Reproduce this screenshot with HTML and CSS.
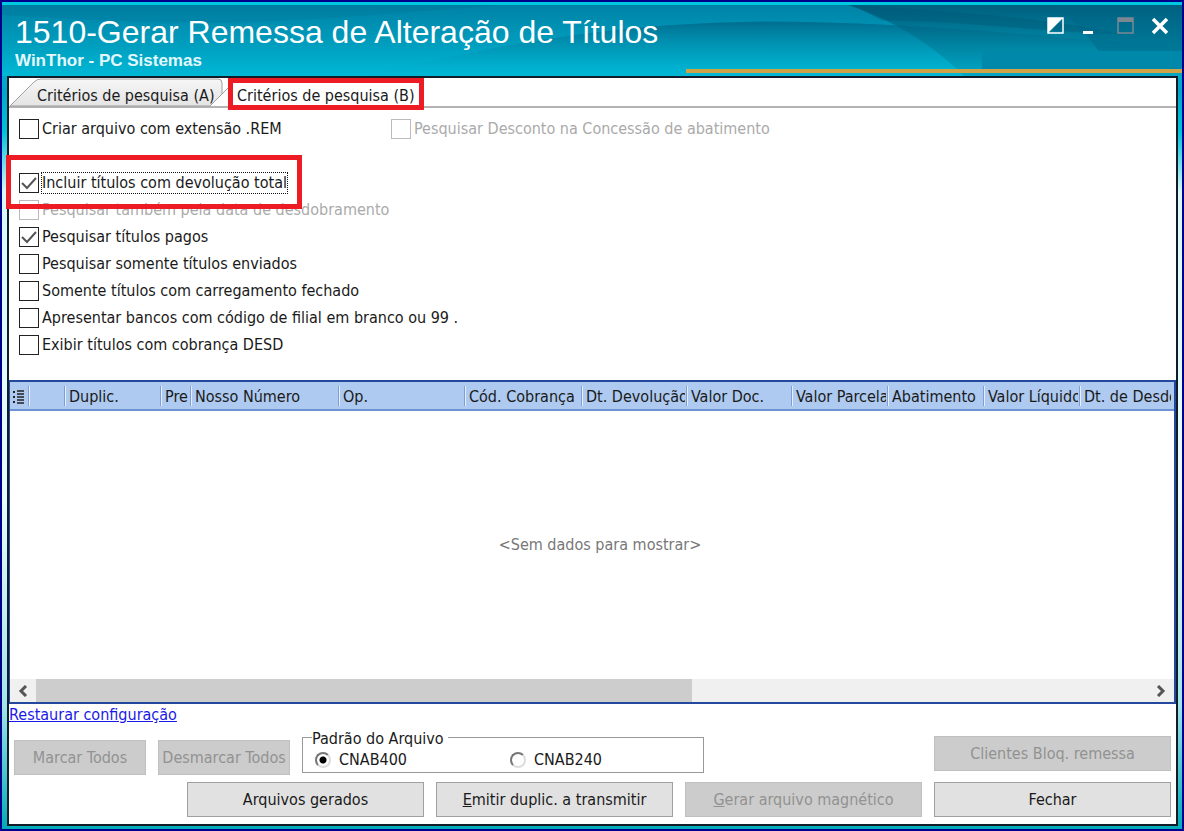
FILE: index.html
```
<!DOCTYPE html>
<html lang="pt-BR">

<head>
    <meta charset="UTF-8">
    <meta name="viewport" content="width=device-width, initial-scale=1.0">
    <title>1510-Gerar Remessa de Alteração de Títulos</title>
    <link rel="stylesheet" href="styles.css">
</head>

<body>
    <div class="window">
        <header class="title-bar">
            <svg class="waves" viewBox="0 0 1180 73" preserveAspectRatio="none" aria-hidden="true">
                <defs>
                    <linearGradient id="dark" x1="0" y1="0" x2="0" y2="1">
                        <stop offset="0" stop-color="#006a8c" stop-opacity="0.9" />
                        <stop offset="1" stop-color="#00b4d0" stop-opacity="0" />
                    </linearGradient>
                    <linearGradient id="right" x1="0" y1="0" x2="0" y2="1">
                        <stop offset="0" stop-color="#00506c" stop-opacity="0.7" />
                        <stop offset="1" stop-color="#0096b4" stop-opacity="0.5" />
                    </linearGradient>
                </defs>
                <path d="M350 73 C460 54 560 20 760 17 C900 17 1020 30 1180 44 V73 Z" fill="url(#dark)" />
                <path d="M0 0 H500 C420 6 340 14 240 18 C150 20 60 14 0 10 Z" fill="#006f94" fill-opacity="0.25" />
                <path d="M846 0 C900 18 940 50 962 73 H1180 V0 Z" fill="url(#right)" />
                <path d="M880 16 C960 16 1040 28 1120 30 C1040 12 940 6 850 0 Z" fill="#005472" fill-opacity="0.35" />
                <path d="M1052 0 C1074 18 1090 36 1098 50 H1180 V0 Z" fill="#006484" fill-opacity="0.45" />
            </svg>
            <div class="title-text">
                <h1>1510-Gerar Remessa de Alteração de Títulos</h1>
                <p>WinThor - PC Sistemas</p>
            </div>
            <div class="window-buttons">
                <button type="button" aria-label="Reduzir"><svg width="18" height="18" viewBox="0 0 18 18">
                        <rect x="1" y="1" width="15" height="15" fill="none" stroke="#fff" stroke-width="1.5" />
                        <path d="M1 1 H16 L1 16 Z" fill="#fff" />
                    </svg></button>
                <button type="button" aria-label="Minimizar"><svg width="18" height="18" viewBox="0 0 18 18">
                        <rect x="1" y="14" width="10" height="3" fill="#fff" />
                    </svg></button>
                <button type="button" aria-label="Maximizar" disabled><svg width="18" height="18" viewBox="0 0 18 18">
                        <rect x="1" y="1" width="15" height="15" fill="none" stroke="#7b8892" stroke-width="1.5" />
                        <rect x="1" y="1" width="15" height="4" fill="#7b8892" />
                    </svg></button>
                <button type="button" aria-label="Fechar janela"><svg width="18" height="18" viewBox="0 0 18 18">
                        <path d="M1 2 L15 16 M15 2 L1 16" stroke="#fff" stroke-width="3.5" />
                    </svg></button>
            </div>
            <div class="title-patch"></div>
            <div class="title-line"></div>
        </header>

        <main class="panel">
            <nav class="tabs">
                <a href="#criterios-a" class="tab">
                    <svg class="tab-shape" width="220" height="30" viewBox="0 0 220 30" aria-hidden="true">
                        <defs>
                            <linearGradient id="tab" x1="0" y1="0" x2="0" y2="1">
                                <stop offset="0" stop-color="#f6f6f6" />
                                <stop offset="1" stop-color="#e4e4e4" />
                            </linearGradient>
                        </defs>
                        <path d="M1 28 L25 4 Q28 1 32 1 H209 Q213 1 213 5 V16 L201 28 Z" fill="url(#tab)" stroke="#a0a0a0" />
                        <path d="M213 16 L220 9" stroke="#a0a0a0" />
                    </svg>
                    <span>Critérios de pesquisa (A)</span>
                </a>
                <a href="#criterios-b" class="tab active">
                    <span>Critérios de pesquisa (B)</span>
                </a>
            </nav>

            <section class="options" id="criterios-b">
                <div class="option-row">
                    <label class="check"><input type="checkbox"><span>Criar arquivo com extensão .REM</span></label>
                    <label class="check disabled"><input type="checkbox" disabled><span>Pesquisar Desconto na Concessão de abatimento</span></label>
                </div>
                <div class="option-list">
                    <label class="check highlight"><input type="checkbox" checked><span class="focus">Incluir títulos com devolução total</span></label>
                    <label class="check disabled"><input type="checkbox" disabled><span>Pesquisar também pela data de desdobramento</span></label>
                    <label class="check"><input type="checkbox" checked><span>Pesquisar títulos pagos</span></label>
                    <label class="check"><input type="checkbox"><span>Pesquisar somente títulos enviados</span></label>
                    <label class="check"><input type="checkbox"><span>Somente títulos com carregamento fechado</span></label>
                    <label class="check"><input type="checkbox"><span>Apresentar bancos com código de filial em branco ou 99 .</span></label>
                    <label class="check"><input type="checkbox"><span>Exibir títulos com cobrança DESD</span></label>
                </div>
            </section>

            <section class="grid">
                <table>
                    <colgroup>
                        <col class="w-menu">
                        <col class="w-mark">
                        <col class="w-dup">
                        <col class="w-pre">
                        <col class="w-num">
                        <col class="w-op">
                        <col class="w-cod">
                        <col class="w-dev">
                        <col class="w-doc">
                        <col class="w-val">
                        <col class="w-val">
                        <col class="w-val">
                        <col>
                    </colgroup>
                    <thead>
                        <tr>
                            <th><svg width="12" height="16" viewBox="0 0 12 16" aria-label="Colunas">
                                    <path d="M0 3h2M0 8h2M0 13h2" stroke="#222" stroke-width="2" />
                                    <path d="M4 2h7M4 5h7M4 8h7M4 11h7M4 14h7" stroke="#222" stroke-width="1.6" />
                                </svg></th>
                            <th></th>
                            <th><span>Duplic.</span></th>
                            <th><span>Pre</span></th>
                            <th><span>Nosso Número</span></th>
                            <th><span>Op.</span></th>
                            <th><span>Cód. Cobrança</span></th>
                            <th><span>Dt. Devolução</span></th>
                            <th><span>Valor Doc.</span></th>
                            <th><span>Valor Parcela</span></th>
                            <th><span>Abatimento</span></th>
                            <th><span>Valor Líquido</span></th>
                            <th><span>Dt. de Desdo</span></th>
                        </tr>
                    </thead>
                </table>
                <p class="empty">&lt;Sem dados para mostrar&gt;</p>
                <div class="scrollbar">
                    <button type="button" aria-label="Rolar para a esquerda"><svg width="12" height="12" viewBox="0 0 12 12">
                            <path d="M9 1 L4 6 L9 11" fill="none" stroke="#555" stroke-width="3" />
                        </svg></button>
                    <div class="track">
                        <div class="thumb"></div>
                    </div>
                    <button type="button" aria-label="Rolar para a direita"><svg width="12" height="12" viewBox="0 0 12 12">
                            <path d="M3 1 L8 6 L3 11" fill="none" stroke="#555" stroke-width="3" />
                        </svg></button>
                </div>
            </section>

            <footer class="actions">
                <a href="#restaurar" class="restore">Restaurar configuração</a>
                <div class="action-row">
                    <button type="button" class="btn small" disabled>Marcar Todos</button>
                    <button type="button" class="btn small" disabled>Desmarcar Todos</button>
                    <fieldset>
                        <legend>Padrão do Arquivo</legend>
                        <label><input type="radio" name="padrao" checked>CNAB400</label>
                        <label><input type="radio" name="padrao">CNAB240</label>
                    </fieldset>
                    <button type="button" class="btn push" disabled>Clientes Bloq. remessa</button>
                </div>
                <div class="action-row bottom">
                    <button type="button" class="btn">Arquivos gerados</button>
                    <button type="button" class="btn"><u>E</u>mitir duplic. a transmitir</button>
                    <button type="button" class="btn" disabled><u>G</u>erar arquivo magnético</button>
                    <button type="button" class="btn">Fechar</button>
                </div>
            </footer>
        </main>
    </div>
</body>

</html>
```
FILE: styles.css
```
* {
    box-sizing: border-box;
}

body {
    margin: 0;
    font-family: "DejaVu Sans Condensed", Tahoma, sans-serif;
    font-size: 16px;
    line-height: 20px;
    color: #1a1a1a;
}

button,
input {
    font: inherit;
}

.window {
    display: flex;
    flex-direction: column;
    min-height: 100vh;
    padding: 0 4px 3px 5px;
    border: 2px solid #00008b;
    background: linear-gradient(to bottom, #00b8d4 0, #00a8c8 90px, #00c4d8 130px, #d8f8fa 190px, #e8fcfc 60%, #a0e4ea 85%, #00acb8 100%);
}

/* Barra de título */

.title-bar {
    position: relative;
    display: flex;
    justify-content: space-between;
    height: 74px;
    margin: 0 -4px 0 -5px;
    padding: 12px 12px 0 13px;
    border-top: 3px solid #00c8e0;
    background: linear-gradient(to bottom, #0082a6, #00a0c0 60%, #00b8d6);
    color: #fff;
}

.waves {
    position: absolute;
    inset: 0;
    width: 100%;
    height: 100%;
}

.title-text,
.window-buttons {
    position: relative;
}

.title-text h1 {
    margin: 0;
    font: 32px/30px "Liberation Sans", Arial, sans-serif;
}

.title-text p {
    margin: 4px 0 0;
    font: bold 17px/20px "Liberation Sans", Arial, sans-serif;
    color: #e4f8fc;
}

.window-buttons {
    display: flex;
    align-items: flex-start;
    gap: 17px;
}

.window-buttons button {
    padding: 0;
    border: 0;
    background: none;
}

.window-buttons svg,
.scrollbar svg,
th svg {
    display: block;
}

.title-patch {
    position: absolute;
    right: 0;
    bottom: 7px;
    width: 200px;
    height: 18px;
    background-color: #0088aa;
}

.title-line {
    position: absolute;
    right: 0;
    bottom: 3px;
    width: 42%;
    height: 4px;
    background-color: #d0a446;
}

/* Painel */

.panel {
    display: flex;
    flex: 1;
    flex-direction: column;
    border: 2px solid #101c28;
    background-color: #fff;
}

.tabs {
    display: flex;
    height: 30px;
    border-bottom: 2px solid #b4b4b4;
}

.tab {
    position: relative;
    width: 219px;
    padding: 8px 0 0 28px;
    color: inherit;
    text-decoration: none;
    white-space: nowrap;
}

.tab span {
    position: relative;
}

.tab-shape {
    position: absolute;
    top: 0;
    left: 0;
}

.tab.active {
    width: 196px;
    height: 32px;
    padding: 3px 0 0 4px;
    border: 5px solid #ed1c24;
    background-color: #fff;
}

/* Critérios */

.options {
    padding: 7px 10px 0;
}

.option-row {
    display: flex;
}

.option-row .check:first-child {
    width: 372px;
}

.option-list {
    margin-top: 27px;
}

.check {
    position: relative;
    display: flex;
    align-items: center;
    gap: 3px;
    height: 27px;
}

.check.disabled {
    color: #aaa;
}

.check input {
    appearance: none;
    flex: none;
    width: 20px;
    height: 20px;
    margin: 0;
    border: 1px solid #222;
    background-color: #fff;
}

.check input:checked {
    background-image: url("data:image/svg+xml,%3Csvg xmlns='http://www.w3.org/2000/svg' viewBox='0 0 18 18'%3E%3Cpath d='M2 9 L7 14 L16 4' fill='none' stroke='%23555' stroke-width='2'/%3E%3C/svg%3E");
}

.check input:disabled {
    border-color: #bbb;
}

.check .focus {
    outline: 1px dotted #111;
}

.check.highlight {
    width: fit-content;
}

.check.highlight::before {
    content: '';
    position: absolute;
    z-index: 1;
    top: -14px;
    right: -15px;
    bottom: -13px;
    left: -13px;
    border: 5px solid #ed1c24;
}

/* Grade */

.grid {
    display: flex;
    flex: 1;
    flex-direction: column;
    margin-top: 22px;
    border: 2px solid #24489c;
    border-left-width: 1px;
}

table {
    width: 100%;
    table-layout: fixed;
    border-collapse: collapse;
}

th {
    height: 28px;
    padding: 2px 3px 0;
    border-bottom: 2px solid #6c94d4;
    background:
        linear-gradient(to right, #7f9fd4 50%, #e4eefc 50%) right 4px / 2px 20px no-repeat,
        #aecaf0;
    font-weight: normal;
    text-align: left;
    white-space: nowrap;
}

th span {
    display: block;
    overflow: hidden;
}

th:last-child {
    background: #aecaf0;
}

.w-menu { width: 20px; }
.w-mark { width: 36px; }
.w-dup { width: 96px; }
.w-pre { width: 30px; }
.w-num { width: 148px; }
.w-op { width: 126px; }
.w-cod { width: 117px; }
.w-dev { width: 105px; }
.w-doc { width: 105px; }
.w-val { width: 96px; }

.empty {
    display: flex;
    flex: 1;
    align-items: center;
    justify-content: center;
    margin: 0;
    padding-left: 16px;
    color: #777;
}

.scrollbar {
    display: flex;
    height: 23px;
    background-color: #f0f0f0;
}

.scrollbar button {
    flex: none;
    width: 26px;
    padding: 0 7px;
    border: 0;
    background: none;
}

.track {
    flex: 1;
}

.thumb {
    width: 59%;
    height: 100%;
    background-color: #cdcdcd;
}

/* Rodapé */

.actions {
    padding: 1px 5px 7px;
}

.restore {
    display: block;
    width: fit-content;
    margin: 0 0 3px -5px;
    color: #1a1ae6;
}

.action-row {
    display: flex;
    align-items: flex-end;
    gap: 12px;
}

.action-row.bottom {
    justify-content: flex-end;
    margin-top: 7px;
}

.btn {
    width: 237px;
    height: 35px;
    padding: 0;
    border: 1px solid #a0a0a0;
    background-color: #e1e1e1;
    color: #1a1a1a;
    white-space: nowrap;
}

.btn:disabled {
    border-color: #c0c0c0;
    background-color: #ccc;
    color: #929292;
}

.btn.small {
    width: 132px;
}

.btn.push {
    margin: 0 0 4px auto;
}

fieldset {
    display: flex;
    width: 402px;
    height: 45px;
    margin: 0 0 2px;
    padding: 2px 0 0 9px;
    border: 1px solid #999;
}

legend {
    height: 18px;
    padding: 0 4px 0 0;
    line-height: 22px;
}

fieldset label {
    display: flex;
    align-items: center;
    gap: 8px;
    width: 195px;
    padding-left: 3px;
}

fieldset input {
    appearance: none;
    width: 16px;
    height: 16px;
    margin: 0;
    border: 2px solid;
    border-color: #777 #ddd #ddd #777;
    border-radius: 50%;
}

fieldset input:checked {
    background: radial-gradient(circle, #000 3px, transparent 4px);
}
```
